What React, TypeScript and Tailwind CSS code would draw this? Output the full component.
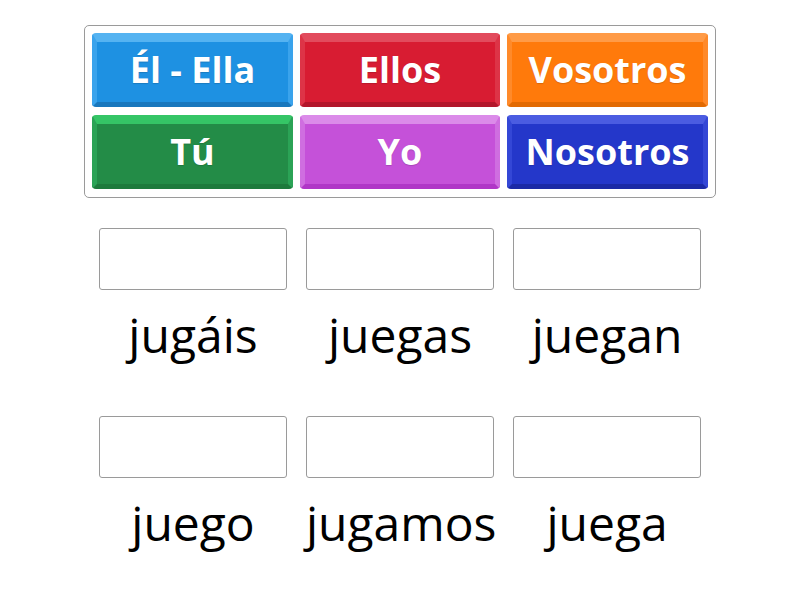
import React from "react";

const buttons = [
  { label: "Él - Ella", cls: "bg-[#1e91e2] border-t-[#55b3f1] border-x-[#3aa3ec] border-b-[#1877bd]" },
  { label: "Ellos", cls: "bg-[#d81c32] border-t-[#e24b5d] border-x-[#dd3447] border-b-[#b3162a]" },
  { label: "Vosotros", cls: "bg-[#ff7a0b] border-t-[#ff9b47] border-x-[#ff8a2a] border-b-[#e26a02]" },
  { label: "Tú", cls: "bg-[#238c47] border-t-[#35c566] border-x-[#2ba356] border-b-[#1d7a3c]" },
  { label: "Yo", cls: "bg-[#c551d9] border-t-[#db8be9] border-x-[#cf6ee0] border-b-[#b036c7]" },
  { label: "Nosotros", cls: "bg-[#2437ca] border-t-[#4b5ce1] border-x-[#3447d6] border-b-[#1b2aa6]" },
];

const words = ["jugáis", "juegas", "juegan", "juego", "jugamos", "juega"];

export default function App() {
  return (
    <div className="w-[800px] h-[600px] bg-white overflow-hidden" style={{ fontFamily: '"Open Sans", sans-serif' }}>
      <div className="pt-[25px] flex justify-center">
        <div className="w-[632px] border border-[#9a9a9a] rounded-[5px] p-[7px] pb-[8px] grid grid-cols-[201px_200px_201px] gap-x-[7px] gap-y-[8px]">
          {buttons.map((b) => (
            <div
              key={b.label}
              className={`h-[74px] rounded-[4px] border-t-[9px] border-x-[5px] border-b-[5px] flex items-center justify-center text-white font-bold text-[36px] leading-none ${b.cls}`}
              style={{ textShadow: "0 1px 1px rgba(0,0,0,0.15)" }}
            >
              <span className="-mt-[5px]">{b.label}</span>
            </div>
          ))}
        </div>
      </div>
      <div className="mt-[30px] flex justify-center">
        <div className="w-[602px] grid grid-cols-3 gap-x-[19px]">
          {words.map((w) => (
            <div key={w} className="flex flex-col h-[188px]">
              <div className="h-[62px] border border-[#9a9a9a] rounded-[3px] bg-white" />
              <div className="pt-[12px] text-center text-[48px] leading-[65px] text-black">{w}</div>
            </div>
          ))}
        </div>
      </div>
    </div>
  );
}
